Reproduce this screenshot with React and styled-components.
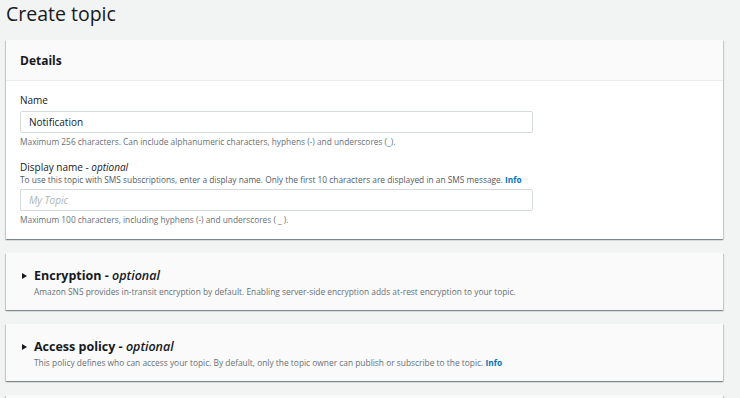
import React from 'react';
import styled, {createGlobalStyle} from 'styled-components';

const GlobalStyle = createGlobalStyle`
  body {
    margin: 0;
    background: #f2f3f3;
    font-family: "Open Sans", "Noto Sans", sans-serif;
    color: #16191f;
  }
`;

export default function App() {
  return (
    <Page>
      <GlobalStyle/>
      <Title>Create topic</Title>

      <Card>
        <CardHeader>Details</CardHeader>
        <CardBody>
          <Field>
            <Label>Name</Label>
            <Input defaultValue="Notification"/>
            <Hint>Maximum 256 characters. Can include alphanumeric characters, hyphens (-) and underscores (_).</Hint>
          </Field>
          <Field spaced>
            <Label>Display name - <em>optional</em></Label>
            <Description>
              To use this topic with SMS subscriptions, enter a display name. Only the first 10 characters are displayed in an SMS message. <Info>Info</Info>
            </Description>
            <Input placeholder="My Topic"/>
            <Hint>Maximum 100 characters, including hyphens (-) and underscores ( _ ).</Hint>
          </Field>
        </CardBody>
      </Card>

      <Section>
        <SectionTitle>
          <Caret/>
          <span>Encryption - <em>optional</em></span>
        </SectionTitle>
        <SectionText>Amazon SNS provides in-transit encryption by default. Enabling server-side encryption adds at-rest encryption to your topic.</SectionText>
      </Section>

      <Section>
        <SectionTitle>
          <Caret/>
          <span>Access policy - <em>optional</em></span>
        </SectionTitle>
        <SectionText>This policy defines who can access your topic. By default, only the topic owner can publish or subscribe to the topic. <Info>Info</Info></SectionText>
      </Section>

      <Section/>
    </Page>
  );
}

const Page = styled.div`
  display: flex;
  flex-direction: column;
  gap: 14px;
  padding: 0 17px 0 6px;
  height: 398px;
  overflow: hidden;
`;

const Title = styled.h1`
  margin: 0 0 -2px;
  font-size: 19.5px;
  font-weight: 400;
  line-height: 28px;
  color: #16191f;
`;

const Card = styled.div`
  background: #fff;
  box-shadow: 0 1px 1px 0 rgba(0, 28, 36, 0.3), 1px 1px 1px 0 rgba(0, 28, 36, 0.15), -1px 1px 1px 0 rgba(0, 28, 36, 0.15);
  flex-shrink: 0;
`;

const CardHeader = styled.div`
  background: #fafafa;
  border-bottom: 1px solid #eaeded;
  height: 40px;
  display: flex;
  align-items: center;
  padding: 0 14px;
  font-size: 12px;
  font-weight: 700;
`;

const CardBody = styled.div`
  padding: 12px 14px 13px;
`;

const Field = styled.div`
  display: flex;
  flex-direction: column;
  margin-top: ${p => p.spaced ? '12px' : '0'};
`;

const Label = styled.label`
  font-size: 10px;
  line-height: 14px;
  margin-bottom: 4px;

  em {
    font-style: italic;
  }
`;

const Description = styled.div`
  font-size: 8.35px;
  line-height: 12px;
  color: #545b64;
  margin-top: -4px;
  margin-bottom: 3px;
`;

const Input = styled.input`
  width: 513px;
  height: 22px;
  box-sizing: border-box;
  border: 1px solid #d5dbdb;
  border-radius: 2px;
  padding: 0 8px;
  font-family: inherit;
  font-size: 10px;
  color: #16191f;

  &::placeholder {
    color: #aab7b8;
    font-style: italic;
  }
`;

const Hint = styled.div`
  margin-top: 3px;
  font-size: 8.35px;
  line-height: 12px;
  color: #687078;
`;

const Info = styled.span`
  color: #0073bb;
  font-weight: 700;
`;

const Section = styled.div`
  background: #fafafa;
  box-shadow: 0 1px 1px 0 rgba(0, 28, 36, 0.3), 1px 1px 1px 0 rgba(0, 28, 36, 0.15), -1px 1px 1px 0 rgba(0, 28, 36, 0.15);
  padding: 14px 14px 11px;
  min-height: 57px;
  box-sizing: border-box;
  flex-shrink: 0;
`;

const SectionTitle = styled.div`
  display: flex;
  align-items: center;
  gap: 7px;
  font-size: 12.5px;
  font-weight: 700;
  line-height: 18px;

  em {
    font-style: italic;
    font-weight: 600;
  }
`;

const Caret = styled.span`
  width: 0;
  height: 0;
  margin-left: 2px;
  border-top: 3.5px solid transparent;
  border-bottom: 3.5px solid transparent;
  border-left: 5px solid #16191f;
`;

const SectionText = styled.div`
  margin: 1px 0 0 14px;
  font-size: 8.4px;
  line-height: 12px;
  color: #687078;
`;
